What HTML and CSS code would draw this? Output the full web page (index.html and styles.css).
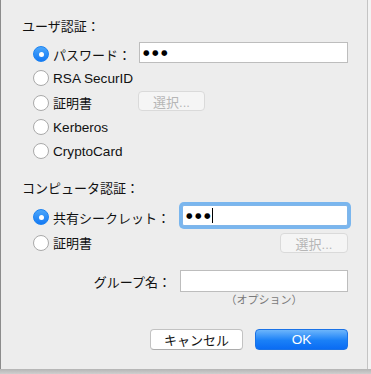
FILE: index.html
```html
<!DOCTYPE html>
<html lang="ja">
<head>
    <meta charset="UTF-8">
    <meta name="viewport" content="width=device-width, initial-scale=1.0">
    <title>認証設定</title>
    <link rel="stylesheet" href="styles.css">
</head>
<body>
    <div class="sheet">
        <div class="group-title">ユーザ認証：</div>
        <div class="options user-options">
            <div class="row">
                <label class="choice"><span class="radio on"></span>パスワード：</label>
                <div class="field"><span class="dots">●●●</span></div>
            </div>
            <div class="row">
                <label class="choice"><span class="radio"></span><span class="latin">RSA SecurID</span></label>
            </div>
            <div class="row">
                <label class="choice"><span class="radio"></span>証明書</label>
                <span class="btn pick">選択...</span>
            </div>
            <div class="row">
                <label class="choice"><span class="radio"></span><span class="latin">Kerberos</span></label>
            </div>
            <div class="row">
                <label class="choice"><span class="radio"></span><span class="latin">CryptoCard</span></label>
            </div>
        </div>

        <div class="group-title second">コンピュータ認証：</div>
        <div class="options machine-options">
            <div class="row tall">
                <label class="choice"><span class="radio on"></span>共有シークレット：</label>
                <div class="field focused"><span class="dots">●●●</span><span class="caret"></span></div>
            </div>
            <div class="row short">
                <label class="choice"><span class="radio"></span>証明書</label>
                <span class="btn pick right">選択...</span>
            </div>
        </div>

        <div class="named">
            <label class="name-label">グループ名：</label>
            <div class="field group-field"></div>
            <span></span>
            <span class="hint">（オプション）</span>
        </div>

        <div class="actions">
            <button type="button" class="btn cancel">キャンセル</button>
            <button type="button" class="btn ok"><span class="latin">OK</span></button>
        </div>
    </div>
</body>
</html>
```

FILE: styles.css
```css
body {
    margin: 0;
    width: 371px;
    height: 374px;
    overflow: hidden;
    background: linear-gradient(to bottom, #f3f3f3 0, #f3f3f3 369px, #b4b4b4 369px, #cfcfcf 374px);
    font-family: "Liberation Sans", "Noto Sans CJK JP", sans-serif;
    font-size: 13px;
    color: #111;
}
.latin {
    font-size: 13.6px;
}
.sheet {
    margin-left: 1px;
    width: 366px;
    height: 369px;
    box-sizing: border-box;
    padding: 19px 19px 0 21px;
    background: #ededed;
    box-shadow: -1px 0 0 #8c8c8c, 1px 0 0 #c4c4c4;
}
.group-title {
    line-height: 16px;
    margin-bottom: 7px;
}
.group-title.second {
    margin-top: 18px;
    margin-bottom: 6px;
}
.options {
    padding-left: 11px;
}
.row {
    display: grid;
    grid-template-columns: 106px 1fr;
    align-items: center;
    height: 24.3px;
}
.machine-options .row {
    grid-template-columns: 149px 1fr;
}
.row.tall {
    height: 28px;
}
.row.short {
    height: 23px;
}
.choice {
    display: flex;
    align-items: center;
    gap: 4px;
    white-space: nowrap;
}
.radio {
    width: 14px;
    height: 14px;
    border: 1px solid #a9a9a9;
    border-radius: 50%;
    background: #fff;
    flex: none;
    position: relative;
}
.radio.on {
    border-color: #1b82f2;
    background: linear-gradient(to bottom, #4aa6fb, #1479f4);
}
.radio.on::after {
    content: "";
    position: absolute;
    left: 4.5px;
    top: 4.5px;
    width: 5px;
    height: 5px;
    border-radius: 50%;
    background: #fff;
}
.field {
    height: 21px;
    box-sizing: border-box;
    border: 1px solid #bdbdbd;
    background: #fff;
    display: flex;
    align-items: center;
    padding-left: 3px;
    margin-bottom: 3px;
}
.field.focused {
    border-color: #80b6ea;
    box-shadow: 0 0 0 3px #7ab6ee;
    border-radius: 2px;
    margin-bottom: 4px;
}
.dots {
    font-family: "DejaVu Sans", sans-serif;
    font-size: 7.5px;
    letter-spacing: 2.5px;
    color: #000;
}
.caret {
    width: 1px;
    height: 15px;
    background: #000;
    margin-left: -1px;
}
.btn {
    font: inherit;
    box-sizing: border-box;
    border-radius: 4px;
    display: inline-flex;
    align-items: center;
    justify-content: center;
}
.pick {
    width: 67px;
    height: 20px;
    margin-left: -1px;
    margin-bottom: 3px;
    border: 1px solid #dadada;
    background: #f5f5f5;
    color: #b6b6b6;
}
.pick.right {
    justify-self: end;
    width: 68px;
    margin: 1px 0 0 0;
}
.named {
    display: grid;
    grid-template-columns: 1fr 168px;
    column-gap: 9px;
    align-items: center;
    margin-top: 16px;
}
.name-label {
    text-align: right;
}
.group-field {
    height: 22px;
    margin-bottom: 0;
}
.hint {
    font-size: 11px;
    line-height: 13px;
    color: #7a7a7a;
    text-align: center;
    margin-top: 2px;
}
.actions {
    display: flex;
    justify-content: flex-end;
    gap: 12px;
    margin-top: 22px;
}
.cancel,
.ok {
    width: 93px;
    height: 21px;
    padding: 0;
}
.cancel {
    border: 1px solid #c2c2c2;
    border-bottom-color: #acacac;
    background: #fff;
    color: #111;
}
.ok {
    border: 1px solid #1a72e6;
    background: linear-gradient(to bottom, #6cb5fb, #1a80f7 55%, #0a6cf4);
    color: #fff;
}
```
